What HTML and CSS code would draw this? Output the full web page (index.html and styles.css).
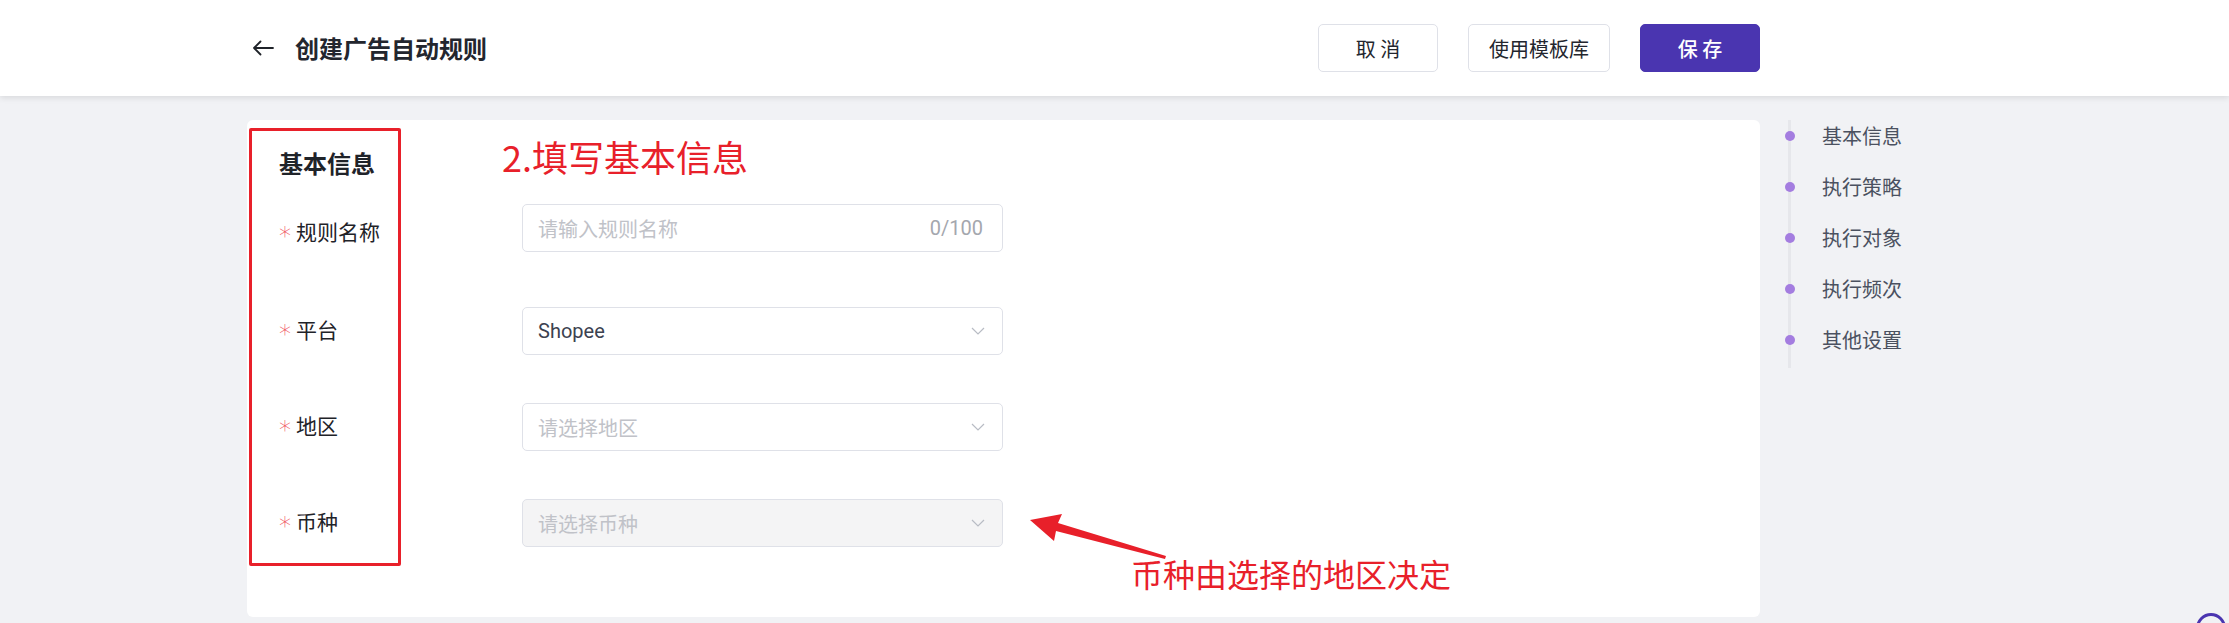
FILE: index.html
```html
<!DOCTYPE html>
<html lang="zh-CN">
<head>
<meta charset="utf-8">
<title>创建广告自动规则</title>
<link rel="stylesheet" href="styles.css">
</head>
<body>
<header class="topbar">
  <div class="topbar-inner">
    <div class="title-wrap">
      <svg class="back" width="22" height="16" viewBox="0 0 22 16"><path d="M21 8H2M8.5 1.5L2 8l6.5 6.5" fill="none" stroke="#1f2329" stroke-width="1.8" stroke-linecap="round" stroke-linejoin="round"/></svg>
      <h1 class="title">创建广告自动规则</h1>
    </div>
    <div class="actions">
      <button class="btn">取 消</button>
      <button class="btn btn-wide">使用模板库</button>
      <button class="btn btn-primary">保 存</button>
    </div>
  </div>
</header>

<main class="main">
  <section class="card">
    <h2 class="section-title">基本信息</h2>
    <div class="form">
      <div class="row row-first">
        <label class="label"><span class="req">*</span>规则名称</label>
        <div class="field">
          <span class="placeholder">请输入规则名称</span>
          <span class="count">0/100</span>
        </div>
      </div>
      <div class="row">
        <label class="label"><span class="req">*</span>平台</label>
        <div class="field">
          <span class="value">Shopee</span>
          <svg class="chev" width="14" height="8" viewBox="0 0 14 8"><path d="M1 1l6 6 6-6" fill="none" stroke="#b8bcc4" stroke-width="1.2"/></svg>
        </div>
      </div>
      <div class="row">
        <label class="label"><span class="req">*</span>地区</label>
        <div class="field">
          <span class="placeholder">请选择地区</span>
          <svg class="chev" width="14" height="8" viewBox="0 0 14 8"><path d="M1 1l6 6 6-6" fill="none" stroke="#b8bcc4" stroke-width="1.2"/></svg>
        </div>
      </div>
      <div class="row">
        <label class="label"><span class="req">*</span>币种</label>
        <div class="field field-disabled">
          <span class="placeholder">请选择币种</span>
          <svg class="chev" width="14" height="8" viewBox="0 0 14 8"><path d="M1 1l6 6 6-6" fill="none" stroke="#b8bcc4" stroke-width="1.2"/></svg>
        </div>
      </div>
    </div>

    <div class="mark-box"></div>
    <div class="note note-top">2.填写基本信息</div>
    <svg class="note-arrow" width="150" height="56" viewBox="0 0 150 56"><path d="M4 9 L36 3 L32 12 L140 45 L139 48 L30 20 L28 30 Z" fill="#e8202a"/></svg>
    <div class="note note-bottom">币种由选择的地区决定</div>
  </section>

  <nav class="anchor">
    <ul class="anchor-list">
      <li class="anchor-item">基本信息</li>
      <li class="anchor-item">执行策略</li>
      <li class="anchor-item">执行对象</li>
      <li class="anchor-item">执行频次</li>
      <li class="anchor-item">其他设置</li>
    </ul>
  </nav>
</main>

<div class="float-ring"></div>
</body>
</html>
```

FILE: styles.css
```css
* { box-sizing: border-box; }
html, body { margin: 0; padding: 0; }
body {
  background: #f1f2f5;
  font-family: "Noto Sans CJK SC", "Noto Sans", sans-serif;
  color: #1f2329;
  width: 2229px;
  height: 623px;
  overflow: hidden;
  position: relative;
}

.topbar {
  height: 96px;
  background: #fff;
  box-shadow: 0 2px 6px rgba(0, 0, 0, 0.10);
  position: relative;
  z-index: 2;
}
.topbar-inner {
  margin-left: 252px;
  width: 1508px;
  height: 96px;
  display: flex;
  align-items: center;
  justify-content: space-between;
}
.title-wrap { display: flex; align-items: center; gap: 21px; }
.back { display: block; }
.title {
  margin: 0;
  font-size: 24px;
  font-weight: 700;
  color: #23262e;
  line-height: 1;
}
.actions { display: flex; gap: 30px; align-items: center; }
.btn {
  height: 48px;
  width: 120px;
  border: 1px solid #dfe1e8;
  border-radius: 5px;
  background: #fff;
  font-family: inherit;
  font-size: 20px;
  color: #23262e;
  padding: 0;
  cursor: pointer;
}
.btn-wide { width: 142px; }
.btn-primary {
  background: #4a35b0;
  border-color: #4a35b0;
  color: #fff;
  font-weight: 500;
}

.main {
  display: flex;
  align-items: flex-start;
  padding-left: 247px;
}
.card {
  position: relative;
  margin-top: 24px;
  width: 1513px;
  height: 497px;
  background: #fff;
  border-radius: 6px;
  padding: 28px 0 0 32px;
}
.section-title {
  margin: 0;
  font-size: 24px;
  font-weight: 700;
  line-height: 30px;
  color: #1f2329;
}
.form {
  margin-top: 26px;
  display: flex;
  flex-direction: column;
  gap: 48px;
}
.row {
  display: flex;
  align-items: center;
  height: 48px;
}
.row-first { margin-bottom: 7px; }
.label {
  width: 243px;
  font-size: 21px;
  line-height: 28px;
  color: #1f2329;
  display: flex;
  align-items: center;
  margin-bottom: 5px;
}
.row-first .label { margin-top: 6px; margin-bottom: 0; }
.req {
  color: #f0505a;
  font-size: 24px;
  font-family: "DejaVu Sans", sans-serif;
  font-weight: 300;
  width: 17px;
  position: relative;
  top: 5px;
  line-height: 28px;
}
.field {
  width: 481px;
  height: 48px;
  border: 1px solid #dfe1e8;
  border-radius: 5px;
  display: flex;
  align-items: center;
  justify-content: space-between;
  padding: 0 17px 0 15px;
  font-size: 20px;
  background: #fff;
}
.field-disabled { background: #f4f4f5; }
.placeholder { color: #c0c2c8; }
.value { color: #3c4250; font-family: "Roboto", "Noto Sans", sans-serif; }
.count { color: #a4a7ae; font-family: "Roboto", "Noto Sans", sans-serif; margin-right: 2px; }
.chev { display: block; }

.mark-box {
  position: absolute;
  left: 2px;
  top: 8px;
  width: 152px;
  height: 438px;
  border: 3px solid #e8202a;
  border-radius: 2px;
  pointer-events: none;
}
.note {
  position: absolute;
  color: #e8202a;
  line-height: 1;
  white-space: nowrap;
}
.note-top {
  left: 255px;
  top: 18px;
  font-size: 36px;
}
.note-bottom {
  left: 884px;
  top: 437px;
  font-size: 32px;
}
.note-arrow {
  position: absolute;
  left: 779px;
  top: 391px;
}

.anchor {
  margin-top: 14px;
  margin-left: 28px;
  position: relative;
}
.anchor::before {
  content: "";
  position: absolute;
  left: 0;
  top: 10px;
  bottom: -3px;
  width: 3px;
  background: #e6e7eb;
}
.anchor-list { list-style: none; margin: 0; padding: 0; }
.anchor-item {
  position: relative;
  height: 51px;
  line-height: 51px;
  padding-left: 34px;
  font-size: 20px;
  color: #4b5160;
}
.anchor-item::before {
  content: "";
  position: absolute;
  left: -3px;
  top: 21px;
  width: 10px;
  height: 10px;
  border-radius: 50%;
  background: #a47de0;
}

.float-ring {
  position: absolute;
  left: 2196px;
  top: 613px;
  width: 30px;
  height: 30px;
  border: 3px solid #4a35b0;
  border-radius: 50%;
}
```
